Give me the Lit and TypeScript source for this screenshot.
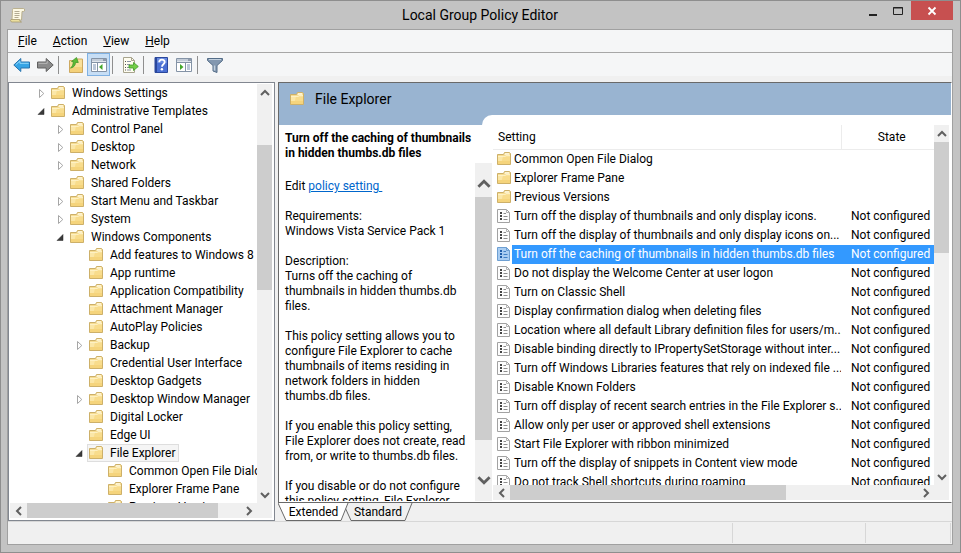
import { LitElement, html, svg, css, nothing } from "lit";
import { customElement, property, state } from "lit/decorators.js";
import { classMap } from "lit/directives/class-map.js";
import { styleMap } from "lit/directives/style-map.js";

type Twisty = "open" | "closed" | "";
interface TreeNode { label: string; depth: number; twisty: Twisty }
interface Setting { name: string; folder?: boolean }

const node = (depth: number, label: string, twisty: Twisty = ""): TreeNode => ({ depth, label, twisty });

const TREE: TreeNode[] = [
  node(0, "Windows Settings", "closed"),
  node(0, "Administrative Templates", "open"),
  node(1, "Control Panel", "closed"),
  node(1, "Desktop", "closed"),
  node(1, "Network", "closed"),
  node(1, "Shared Folders"),
  node(1, "Start Menu and Taskbar", "closed"),
  node(1, "System", "closed"),
  node(1, "Windows Components", "open"),
  node(2, "Add features to Windows 8"),
  node(2, "App runtime"),
  node(2, "Application Compatibility"),
  node(2, "Attachment Manager"),
  node(2, "AutoPlay Policies"),
  node(2, "Backup", "closed"),
  node(2, "Credential User Interface"),
  node(2, "Desktop Gadgets"),
  node(2, "Desktop Window Manager", "closed"),
  node(2, "Digital Locker"),
  node(2, "Edge UI"),
  node(2, "File Explorer", "open"),
  node(3, "Common Open File Dialog"),
  node(3, "Explorer Frame Pane"),
  node(3, "Previous Versions"),
];

const SETTINGS: Setting[] = [
  { name: "Common Open File Dialog", folder: true },
  { name: "Explorer Frame Pane", folder: true },
  { name: "Previous Versions", folder: true },
  { name: "Turn off the display of thumbnails and only display icons." },
  { name: "Turn off the display of thumbnails and only display icons on..." },
  { name: "Turn off the caching of thumbnails in hidden thumbs.db files" },
  { name: "Do not display the Welcome Center at user logon" },
  { name: "Turn on Classic Shell" },
  { name: "Display confirmation dialog when deleting files" },
  { name: "Location where all default Library definition files for users/m..." },
  { name: "Disable binding directly to IPropertySetStorage without inter..." },
  { name: "Turn off Windows Libraries features that rely on indexed file ..." },
  { name: "Disable Known Folders" },
  { name: "Turn off display of recent search entries in the File Explorer s..." },
  { name: "Allow only per user or approved shell extensions" },
  { name: "Start File Explorer with ribbon minimized" },
  { name: "Turn off the display of snippets in Content view mode" },
  { name: "Do not track Shell shortcuts during roaming" },
];

const DESCRIPTION = `Turns off the caching of
thumbnails in hidden thumbs.db
files.

This policy setting allows you to
configure File Explorer to cache
thumbnails of items residing in
network folders in hidden
thumbs.db files.

If you enable this policy setting,
File Explorer does not create, read
from, or write to thumbs.db files.

If you disable or do not configure
this policy setting, File Explorer`;

const folderIcon = html`<svg class="icon" width="16" height="16" viewBox="0 0 16 16" aria-hidden="true">
  <path d="M1.500 13.500V3.500h6l1-2h5l1 1v11z" fill="#f6da8c" stroke="#cdb069"/>
  <path d="M9 2.300h4v1.500H8.500z" fill="#fffbe9"/>
  <path d="M2 5h7.200l1-1.200H14V13H2z" fill="#fbe7a8"/>
  <path d="M7 5.500h7V13H5z" fill="#f8dc8c"/>
  <path d="M2 10h12v3H2z" fill="#f5d47c"/>
  <path d="M2 5.400h7.400l1-1.100H14" fill="none" stroke="#fff5cf" stroke-width=".8"/>
</svg>`;

const settingIcon = (selected: boolean) => html`<svg class="icon" width="16" height="16" viewBox="0 0 16 16" aria-hidden="true">
  <path d="M1.500 1.500h9l3 3v10h-12z" fill=${selected ? "#a9cdf2" : "#fdfdfd"} stroke=${selected ? "#6d9fd2" : "#a2a2a2"}/>
  <path d="M10.500 1.500v3h3" fill="none" stroke=${selected ? "#6d9fd2" : "#b4b4b4"}/>
  <path d="M4 4h2v2H4zM4 7h2v2H4zM4 10h2v2H4z" fill=${selected ? "#1f5da8" : "#454545"}/>
  <path d="M7.500 5.500H10M7.500 8.500h4M7.500 11.500h4" stroke=${selected ? "#3f7fc4" : "#8d8d8d"}/>
</svg>`;

const toolIcon = (content: unknown) =>
  html`<svg width="18" height="18" viewBox="0 0 18 18" aria-hidden="true">${content}</svg>`;

const ICONS = {
  back: toolIcon(svg`<path d="M.8 9l7-6.500v3.500h8.700v6H7.800v3.500z" fill="#35a4e6" stroke="#2873ad"/><path d="M2.800 8.700L6.900 5v2.300h8.800" fill="none" stroke="#93d8fb"/>`),
  forward: toolIcon(svg`<path d="M17.200 9l-7-6.500v3.500H1.500v6h8.700v3.500z" fill="#8b8b8b" stroke="#606060"/><path d="M2.500 7.300h8.700V5" fill="none" stroke="#b9b9b9"/>`),
  up: toolIcon(svg`<path d="M2.500 16.500v-12h6l1-1.500h6v13.500z" fill="#f9e09a" stroke="#cda960"/><path d="M3 11h12v5H3z" fill="#f4d17a"/>
    <path d="M3.500 12c3-.3 5-2.500 5-5.500h2.800L9.500 1.500 4.500 5.500h1.700c0 3-.7 5-2.700 6.500z" fill="#5dbb36" stroke="#3b9324" stroke-width=".7"/>`),
  tree: toolIcon(svg`<path d="M1.500 2.500h15v13h-15z" fill="#fff" stroke="#8493a6"/><path d="M2 3h14v2.500H2z" fill="#c3ccd8"/><path d="M13 4h3" stroke="#5c6b80"/><path d="M2 6.500h14M7.500 7v8" stroke="#8493a6"/>
    <path d="M3 9h3M3 11h3M3 13h3" stroke="#7890b2"/><path d="M12.500 8v6L9 11z" fill="#45a82c"/>`),
  export: toolIcon(svg`<path d="M2.500 1.500h8l3 3v12h-11z" fill="#fffdf0" stroke="#a8a48e"/><path d="M10.500 1.500v3h3" fill="none" stroke="#a8a48e"/>
    <path d="M4 5.500h1M4 8.500h1M4 11.500h1M4 14h1" stroke="#555"/><path d="M6 5.500h4M6 8.500h3M6 11.500h3M6 14h4" stroke="#8b93a5"/>
    <path d="M8 9h4.500V6.500L17.300 10.500 12.500 14.500V12H8z" fill="#73cd48" stroke="#3e9b26" stroke-width=".8"/>`),
  help: toolIcon(svg`<path d="M3 1.500h12.500v15H3z" fill="#4a6fd3" stroke="#2a479c"/><path d="M3 2h2v14H3z" fill="#2a479c"/><path d="M5 2h10v5H5z" fill="#6688df"/>
    <path d="M7.200 6.300c0-3.700 5.500-3.500 5.500-.3 0 2.300-2.700 2.200-2.700 4.700" fill="none" stroke="#fff" stroke-width="1.800"/><circle cx="9.900" cy="13.300" r="1.200" fill="#fff"/>`),
  actions: toolIcon(svg`<path d="M1.500 2.500h15v13h-15z" fill="#fff" stroke="#8493a6"/><path d="M2 3h14v2.500H2z" fill="#c3ccd8"/><path d="M13 4h3" stroke="#5c6b80"/><path d="M2 6.500h14M10.500 7v8" stroke="#8493a6"/>
    <path d="M12 9h3M12 11h3M12 13h3" stroke="#7890b2"/><path d="M5 8v6L8.500 11z" fill="#45a82c"/>`),
  filter: toolIcon(svg`<path d="M1.500 2.500h15v2l-5.500 5v7l-4-1.500V9.500l-5.500-5z" fill="#8398b0" stroke="#546d88"/><path d="M3 3.500h12" stroke="#c3d1df"/><path d="M8.500 9.500v5" stroke="#c3d1df" stroke-width="1.500"/>`),
};

@customElement("scroll-bar")
export class ScrollBar extends LitElement {
  @property({ reflect: true }) axis: "x" | "y" = "y";
  @property({ type: Boolean, reflect: true }) large = false;
  @property({ type: Number }) start = 0;
  @property({ type: Number }) size = 50;

  static styles = css`
    :host { display: flex; background: #f0f0f0; min-width: 0; min-height: 0; }
    :host([axis="y"]) { flex-direction: column; }
    button {
      flex: none; width: 15px; height: 17px; padding: 0; border: 0; background: none;
      display: flex; align-items: center; justify-content: center;
    }
    :host([axis="x"]) button { width: 17px; height: 15px; }
    :host([large]) button { width: 17px; height: 34px; }
    :host([large]) button:first-child { padding-top: 8px; }
    :host([large]) button:last-child { padding-bottom: 8px; }
    .track { flex: 1; display: flex; flex-direction: inherit; min-width: 0; min-height: 0; }
    .thumb { background: #cdcdcd; }
    path { fill: none; stroke: #606060; stroke-width: 2; }
  `;

  private arrow(d: string, label: string) {
    const s = this.large ? 14 : 10;
    return html`<button aria-label=${label} tabindex="-1">
      <svg width=${s} height=${s} viewBox="0 0 10 10"><path d=${d} /></svg>
    </button>`;
  }

  render() {
    const y = this.axis === "y";
    return html`
      ${y ? this.arrow("M1 7l4-4 4 4", "Scroll up") : this.arrow("M7 1L3 5l4 4", "Scroll left")}
      <div class="track">
        <div style=${styleMap({ flex: `${this.start} 0 0` })}></div>
        <div class="thumb" style=${styleMap({ flex: `${this.size} 0 0` })}></div>
        <div style=${styleMap({ flex: `${100 - this.start - this.size} 0 0` })}></div>
      </div>
      ${y ? this.arrow("M1 3l4 4 4-4", "Scroll down") : this.arrow("M3 1l4 4-4 4", "Scroll right")}
    `;
  }
}

@customElement("policy-tree")
export class PolicyTree extends LitElement {
  @state() private selected = "File Explorer";

  static styles = css`
    :host {
      display: grid; grid-template: minmax(0, 1fr) 15px / minmax(0, 1fr) 15px;
      box-sizing: border-box; padding: 1px 2px 2px 1px; background: #fff; border: 1px solid #828790;
      min-height: 0;
    }
    ul { list-style: none; margin: 0; padding: 0; overflow: hidden; min-height: 0; }
    li { display: flex; align-items: center; height: 18px; }
    .d0 { padding-left: 27px; }
    .d1 { padding-left: 46px; }
    .d2 { padding-left: 65px; }
    .d3 { padding-left: 84px; }
    .twisty { flex: none; width: 12px; height: 12px; }
    .item {
      flex: none; display: flex; align-items: center; gap: 6px; box-sizing: border-box; height: 18px;
      padding: 0 3px 0 0; border: 1px solid transparent; background: none; color: #000;
      font: inherit; white-space: nowrap;
    }
    .selected { background: #f5f5f5; border-color: #dedede; }
    .icon { flex: none; }
    .corner { background: #f0f0f0; }
  `;

  render() {
    return html`
      <ul role="tree">
        ${TREE.map((n) => html`
          <li class="d${n.depth}" role="treeitem">
            <svg class="twisty" viewBox="0 0 12 12" aria-hidden="true">
              ${n.twisty === "closed" ? svg`<path d="M2.500 2.500v8L6.800 6.500z" fill="#fff" stroke="#a6a6a6"/>`
                : n.twisty === "open" ? svg`<path d="M7 3.500v6H1z" fill="#3a3a3a" stroke="#262626" stroke-width=".5"/>` : nothing}
            </svg>
            <button class=${classMap({ item: true, selected: n.label === this.selected })}
              @click=${() => (this.selected = n.label)}>${folderIcon}${n.label}</button>
          </li>`)}
      </ul>
      <scroll-bar axis="y" start="11.4" size="37.6"></scroll-bar>
      <scroll-bar axis="x" start="0" size="89.5"></scroll-bar>
      <div class="corner"></div>
    `;
  }
}

@customElement("policy-details")
export class PolicyDetails extends LitElement {
  @state() private selected = 5;
  @state() private tab = "Extended";

  static styles = css`
    :host { display: flex; flex-direction: column; min-width: 0; min-height: 0; }
    .frame {
      flex: 1; min-height: 0; display: flex; flex-direction: column; background: #fff;
      border: 1px solid #696969; border-right-color: #fff;
    }
    .head { flex: none; display: grid; grid-template-columns: 203px 1fr; height: 42px; background: #99b4d1; }
    .heading {
      display: flex; align-items: center; gap: 10px; margin: 0; padding: 0 0 10px 10px;
      font-size: 14px; font-weight: 400;
    }
    .curve { align-self: end; height: 10px; background: #fff; border-top-left-radius: 10px; }
    .body { flex: 1; min-height: 0; display: grid; grid-template-columns: 214px minmax(0, 1fr); }
    .about { display: flex; flex-direction: column; min-height: 0; line-height: 15px; padding-bottom: 1px; }
    .about h2 { flex: none; margin: 0; padding: 6px 0 2px 6px; font-size: 12px; font-weight: 700; white-space: nowrap; }
    .scroller { flex: 1; min-height: 0; display: grid; grid-template-columns: minmax(0, 1fr) 17px; padding-right: 1px; }
    .text { overflow: hidden; padding: 16px 0 0 6px; white-space: nowrap; }
    .text p { margin: 0 0 15px; white-space: pre; }
    a { color: #0066cc; }
    .list {
      min-width: 0; min-height: 0; display: grid;
      grid-template: minmax(0, 1fr) 15px / minmax(0, 1fr) 15px; padding: 0 2px 2px 0;
    }
    .rows { overflow: hidden; min-height: 0; }
    table { width: 100%; table-layout: fixed; border-collapse: collapse; }
    th {
      box-sizing: border-box; height: 24px; padding: 0 5px; text-align: left; font-weight: 400;
      border-bottom: 1px solid #ececec;
    }
    th.state { width: 93px; padding-left: 13px; text-align: center; border-left: 1px solid #ececec; }
    td { height: 19px; padding: 0; white-space: nowrap; overflow: hidden; line-height: 19px; }
    td.state { padding-left: 10px; }
    .cell { display: flex; align-items: center; padding-left: 3px; }
    .icon { flex: none; }
    .name { flex: 1; min-width: 0; padding-left: 2px; }
    .selected .name, .selected td.state { background: #3399ff; color: #fff; }
    .corner { background: #f0f0f0; }
    .tabs { display: flex; height: 18px; flex: none; }
    .tab {
      position: relative; height: 18px; padding: 0; border: 0; background: none; font: inherit; color: #000;
      display: grid; place-items: center;
    }
    .tab svg { grid-area: 1 / 1; }
    .tab span { grid-area: 1 / 1; }
    .tab:first-child { z-index: 1; }
    .tab + .tab { margin-left: -6px; }
    .tab path { fill: #f0f0f0; stroke: #696969; }
    .tab.current path { fill: #fff; }
  `;

  private tabButton(name: string, width: number) {
    return html`<button class=${classMap({ tab: true, current: this.tab === name })} role="tab" @click=${() => (this.tab = name)}>
      <svg width=${width} height="18" viewBox="0 0 ${width} 18" aria-hidden="true">
        <path d="M0 0L8 17.500H${width - 8}L${width - 1} 0" />
      </svg>
      <span>${name}</span>
    </button>`;
  }

  render() {
    return html`
      <div class="frame">
        <div class="head">
          <h1 class="heading">${folderIcon}File Explorer</h1>
          <div class="curve"></div>
        </div>
        <div class="body">
          <section class="about">
            <h2>Turn off the caching of thumbnails<br />in hidden thumbs.db files</h2>
            <div class="scroller">
              <div class="text">
                <p>Edit <a href="#policy">policy setting&nbsp;</a></p>
                <p>Requirements:<br />Windows Vista Service Pack 1</p>
                <p>Description:<br />${DESCRIPTION}</p>
              </div>
              <scroll-bar axis="y" large start="0" size="90"></scroll-bar>
            </div>
          </section>
          <section class="list">
            <div class="rows">
              <table>
                <thead><tr><th>Setting</th><th class="state">State</th></tr></thead>
                <tbody>
                  ${SETTINGS.map((s, i) => html`
                    <tr class=${classMap({ selected: i === this.selected })} @click=${() => (this.selected = i)}>
                      <td><div class="cell">${s.folder ? folderIcon : settingIcon(i === this.selected)}<span class="name">${s.name}</span></div></td>
                      <td class="state">${s.folder ? nothing : "Not configured"}</td>
                    </tr>`)}
                </tbody>
              </table>
            </div>
            <scroll-bar axis="y" start="0" size="34"></scroll-bar>
            <scroll-bar axis="x" start="0" size="67.7"></scroll-bar>
            <div class="corner"></div>
          </section>
        </div>
      </div>
      <div class="tabs" role="tablist">${this.tabButton("Extended", 71)}${this.tabButton("Standard", 70)}</div>
    `;
  }
}

@customElement("app-root")
export class AppRoot extends LitElement {
  static styles = css`
    :host {
      display: flex; flex-direction: column; box-sizing: border-box; height: 100vh; padding: 0 7px 7px 6px;
      border: 1px solid #8e8e8e; background: #c3c3c3; color: #000;
      font: 12px/16px Roboto, "Open Sans", sans-serif;
    }
    button { font: inherit; color: inherit; border: 0; background: none; padding: 0; }
    .titlebar { flex: none; display: grid; grid-template-columns: 1fr auto 1fr; height: 28px; align-items: center; }
    .titlebar h1 { margin: 0; font-size: 14px; font-weight: 400; }
    .app-icon { display: block; margin-left: 1px; }
    .caption { justify-self: end; align-self: start; display: flex; }
    .caption button { width: 26px; height: 19px; display: grid; place-items: center; }
    .caption .close { width: 42px; background: #c75050; }
    .window { flex: 1; min-height: 0; display: flex; flex-direction: column; background: #f0f0f0; border: 1px solid #a0a0a0; }
    .menu { flex: none; display: flex; height: 22px; background: #f5f6f7; border-bottom: 1px solid #a7a7a7; padding-left: 2px; }
    .menu button { padding: 0 8px; }
    .toolbar { flex: none; display: flex; align-items: center; height: 23px; background: #f5f6f7; padding: 0 2px; }
    .toolbar button { width: 23px; height: 23px; box-sizing: border-box; display: grid; place-items: center; }
    .toolbar .pressed { background: #c7def5; border: 1px solid #7fb1e3; }
    .sep { width: 1px; height: 18px; background: #8f8f8f; margin: 0 5px 0 2px; }
    .panes { flex: 1; min-height: 0; display: grid; grid-template-columns: 267px minmax(0, 1fr); gap: 3px; padding: 6px 0 0; }
    .status {
      flex: none; display: grid; grid-template-columns: minmax(0, 1fr) 133px 85px 1px; height: 22px;
      padding-right: 1px; border-top: 1px solid #d7d7d7;
    }
    .status div { border-left: 1px solid #d7d7d7; margin: 1px 0; }
    .status div:first-child { border: 0; }
  `;

  render() {
    return html`
      <header class="titlebar">
        <svg class="app-icon" width="18" height="18" viewBox="0 0 18 18" aria-hidden="true">
          <path d="M5.500 2.500h10c1.500 0 1.500 3 0 3H14l-.5 8.500H4l.5-9.500c0-1.300.3-2 1-2z" fill="#fdf9e4" stroke="#b1a67e" stroke-width=".8"/>
          <path d="M3 13.500h8.500c.3 1.500.8 2.500 2 2.500H4c-1.500 0-1.800-2-1-2.500z" fill="#ecdf9f" stroke="#a79b6e" stroke-width=".8"/>
          <path d="M6.500 5.500h5M6.500 7.500h5M6.500 9.500h5M6.500 11.500h4" stroke="#b3ab93"/>
        </svg>
        <h1>Local Group Policy Editor</h1>
        <div class="caption">
          <button aria-label="Minimize"><svg width="12" height="12"><path d="M3 9h8v2H3z" fill="#222"/></svg></button>
          <button aria-label="Maximize"><svg width="12" height="12"><path d="M1.500 2.500h9v7h-9zM1 3h10" fill="none" stroke="#222"/></svg></button>
          <button class="close" aria-label="Close"><svg width="10" height="10"><path d="M1.500 1.500l7 7M8.500 1.500l-7 7" stroke="#fff" stroke-width="1.800"/></svg></button>
        </div>
      </header>
      <main class="window">
        <nav class="menu">
          <button><u>F</u>ile</button><button><u>A</u>ction</button><button><u>V</u>iew</button><button><u>H</u>elp</button>
        </nav>
        <div class="toolbar" role="toolbar">
          <button aria-label="Back">${ICONS.back}</button>
          <button aria-label="Forward">${ICONS.forward}</button>
          <div class="sep"></div>
          <button aria-label="Up one level">${ICONS.up}</button>
          <button class="pressed" aria-label="Show console tree">${ICONS.tree}</button>
          <div class="sep"></div>
          <button aria-label="Export list">${ICONS.export}</button>
          <div class="sep"></div>
          <button aria-label="Help">${ICONS.help}</button>
          <button aria-label="Show action pane">${ICONS.actions}</button>
          <div class="sep"></div>
          <button aria-label="Filter options">${ICONS.filter}</button>
        </div>
        <div class="panes">
          <policy-tree></policy-tree>
          <policy-details></policy-details>
        </div>
        <footer class="status"><div></div><div></div><div></div><div></div></footer>
      </main>
    `;
  }
}
